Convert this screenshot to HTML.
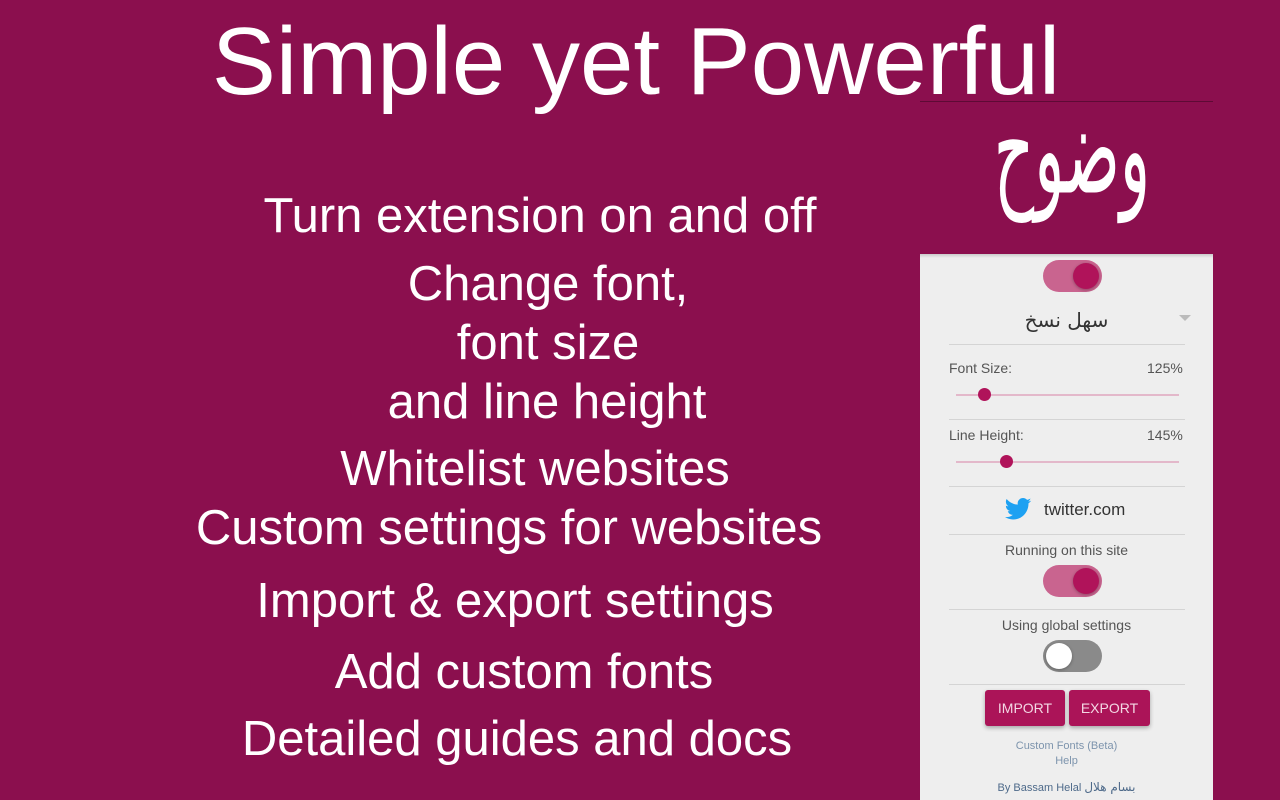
<!DOCTYPE html>
<html><head><meta charset="utf-8"><style>
*{margin:0;padding:0;box-sizing:border-box}
body{width:1280px;height:800px;background:#8b0f4e;position:relative;overflow:hidden;font-family:"Liberation Sans","Noto Sans CJK SC",sans-serif;color:#fff}
.t{position:absolute;white-space:nowrap;font-weight:normal;line-height:1;transform:translateX(-50%)}
.f{font-size:49px}
.panel{position:absolute;left:920px;top:254px;width:293px;height:546px;background:#eeeeee;color:#555;z-index:2}
.hr{position:absolute;left:29px;width:236px;height:1px;background:#d4d4d4}
.p{position:absolute;font-size:14px;line-height:1;white-space:nowrap}
.tg{position:absolute;width:59px;height:32px;border-radius:16px;background:#c9648f}
.tg i{position:absolute;top:3px;width:26px;height:26px;border-radius:50%;background:#b0135a;box-shadow:0 1px 3px rgba(0,0,0,.3)}
.sl{position:absolute;left:36px;width:223px;height:2px;background:#e3b8ca}
.sl i{position:absolute;top:-6px;width:13px;height:13px;border-radius:50%;background:#b0135a}
.btn{position:absolute;top:436px;height:36px;background:#ab1458;color:#f3d7e3;font-size:14px;line-height:36px;text-align:center;border-radius:3px;box-shadow:0 2px 4px rgba(0,0,0,.3)}
</style></head><body>
<div class="t" style="left:636px;top:14px;font-size:96px">Simple yet Powerful</div>
<div style="position:absolute;left:920px;top:101px;width:293px;height:1px;background:#5e0a35"></div>
<div class="t" style="left:1072px;top:88px;font-size:66px;font-family:'DejaVu Sans',serif;transform:translateX(-50%) scale(0.95,1.9);transform-origin:50% 0">وضوح</div>
<div class="t f" style="left:540px;top:192px">Turn extension on and off</div>
<div class="t f" style="left:548px;top:260px">Change font,</div>
<div class="t f" style="left:548px;top:319px">font size</div>
<div class="t f" style="left:547px;top:378px">and line height</div>
<div class="t f" style="left:535px;top:445px">Whitelist websites</div>
<div class="t f" style="left:509px;top:504px">Custom settings for websites</div>
<div class="t f" style="left:515px;top:577px">Import &amp; export settings</div>
<div class="t f" style="left:524px;top:648px">Add custom fonts</div>
<div class="t f" style="left:517px;top:715px">Detailed guides and docs</div>
<div class="panel">
  <div style="position:absolute;left:0;top:0;width:293px;height:4px;background:linear-gradient(rgba(0,0,0,.15),rgba(0,0,0,0))"></div>
  <div class="tg" style="left:123px;top:6px"><i style="left:30px"></i></div>
  <div class="p" style="left:0;width:293px;text-align:center;top:56px;font-size:20px;color:#333;font-family:'DejaVu Sans',sans-serif">سهل نسخ</div>
  <div style="position:absolute;left:259px;top:61px;border-left:6px solid transparent;border-right:6px solid transparent;border-top:6px solid #bbb"></div>
  <div class="hr" style="top:90px"></div>
  <div class="p" style="left:29px;top:107px">Font Size:</div>
  <div class="p" style="left:227px;top:107px">125%</div>
  <div class="sl" style="top:140px"><i style="left:22px"></i></div>
  <div class="hr" style="top:165px"></div>
  <div class="p" style="left:29px;top:174px">Line Height:</div>
  <div class="p" style="left:227px;top:174px">145%</div>
  <div class="sl" style="top:207px"><i style="left:44px"></i></div>
  <div class="hr" style="top:232px"></div>
  <svg style="position:absolute;left:84px;top:244px" width="28" height="22" viewBox="0 0 24 20"><path fill="#1da1f2" d="M24 2.4c-.9.4-1.8.7-2.8.8 1-.6 1.8-1.6 2.2-2.7-1 .6-2 1-3.1 1.2C19.3.7 18 0 16.6 0c-2.7 0-4.9 2.2-4.9 4.9 0 .4 0 .8.1 1.1C7.7 5.8 4.1 3.9 1.7.9c-.4.7-.7 1.6-.7 2.5 0 1.7.9 3.2 2.2 4.1-.8 0-1.6-.2-2.2-.6v.1c0 2.4 1.7 4.4 3.9 4.8-.4.1-.8.2-1.3.2-.3 0-.6 0-.9-.1.6 2 2.4 3.4 4.6 3.4-1.7 1.3-3.8 2.1-6.1 2.1-.4 0-.8 0-1.2-.1 2.2 1.4 4.8 2.2 7.5 2.2 9.1 0 14-7.5 14-14v-.6c1-.7 1.8-1.6 2.5-2.5z"/></svg>
  <div class="p" style="left:124px;top:247px;font-size:17px;color:#333">twitter.com</div>
  <div class="hr" style="top:280px"></div>
  <div class="p" style="left:0;width:293px;text-align:center;top:289px">Running on this site</div>
  <div class="tg" style="left:123px;top:311px"><i style="left:30px"></i></div>
  <div class="hr" style="top:355px"></div>
  <div class="p" style="left:0;width:293px;text-align:center;top:364px">Using global settings</div>
  <div class="tg" style="left:123px;top:386px;background:#8a8a8a"><i style="left:3px;background:#fff"></i></div>
  <div class="hr" style="top:430px"></div>
  <div class="btn" style="left:65px;width:80px">IMPORT</div>
  <div class="btn" style="left:149px;width:81px">EXPORT</div>
  <div class="p" style="left:0;width:293px;text-align:center;top:487px;font-size:11px;color:#7d94ad">Custom Fonts (Beta)</div>
  <div class="p" style="left:0;width:293px;text-align:center;top:502px;font-size:11px;color:#7d94ad">Help</div>
  <div class="p" style="left:0;width:293px;text-align:center;top:527px;font-size:11px;color:#4e6a8a">By Bassam Helal <span style="font-family:'DejaVu Sans',sans-serif;font-size:12px">بسام هلال</span></div>
</div>
</body></html>
